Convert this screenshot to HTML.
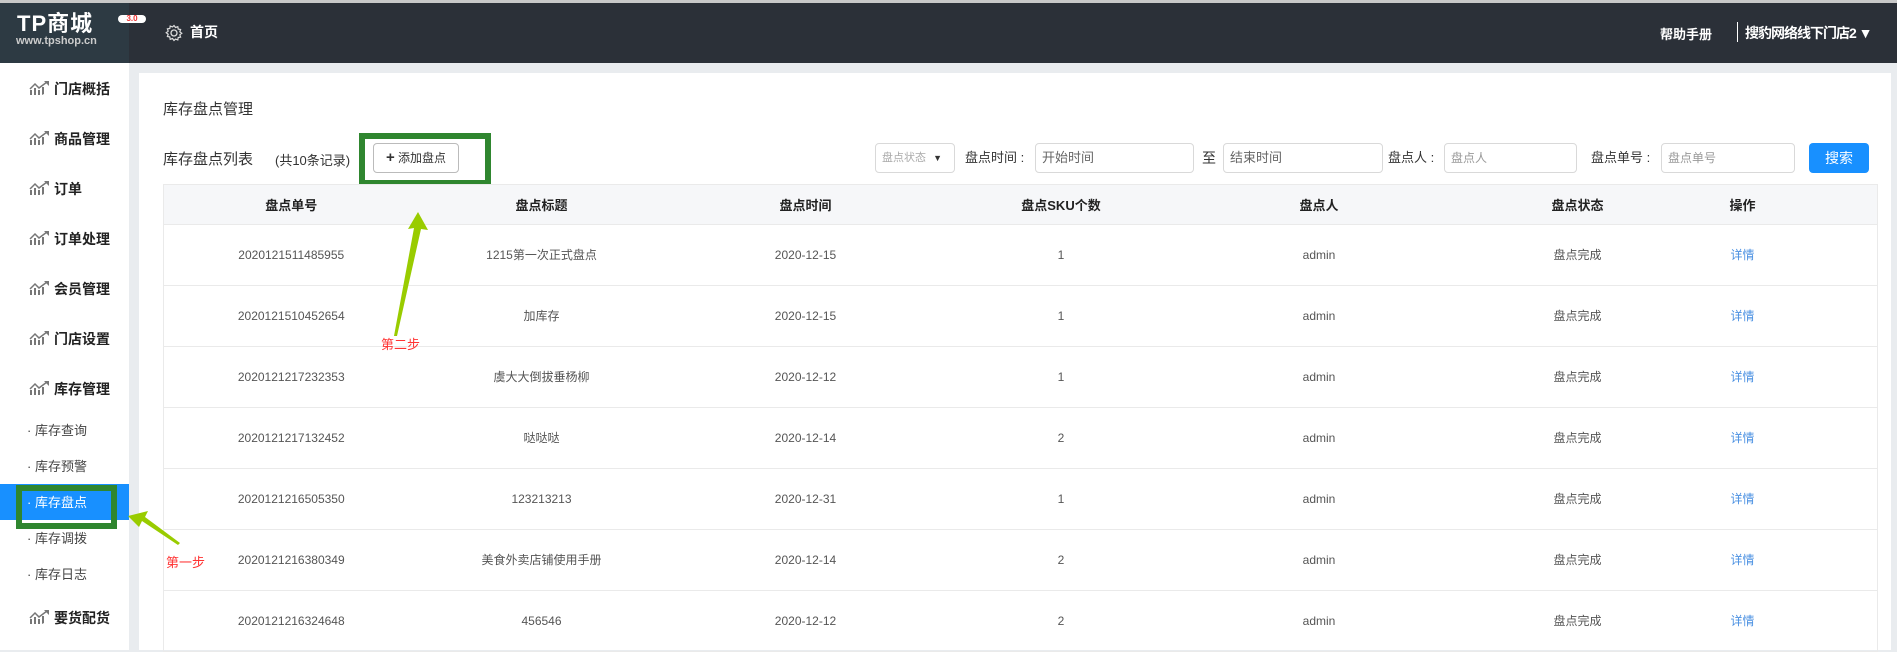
<!DOCTYPE html>
<html><head><meta charset="utf-8">
<style>
*{margin:0;padding:0;box-sizing:border-box}
body{width:1897px;height:650px;overflow:hidden;background:#e9ecef;font-family:"Liberation Sans","Noto Sans CJK SC",sans-serif;position:relative;color:#333}
.abs{position:absolute;white-space:nowrap}
.top{position:absolute;left:0;top:0;width:1897px;height:63px;background:#2b3038;border-top:3px solid #c8c8c8}
.logo{position:absolute;left:0;top:3px;width:129px;height:60px;background:#2d3a43}
.side{position:absolute;left:0;top:63px;width:129px;height:587px;background:#fff}
.panel{position:absolute;left:139px;top:73px;width:1752px;height:577px;background:#fff}
.mi{position:absolute;left:29px;font-size:14px;color:#222;font-weight:bold;height:20px;line-height:20px}
.mi svg{vertical-align:-2px;margin-right:4px}
.si{position:absolute;left:27px;font-size:13px;color:#444;line-height:18px}
.inp{position:absolute;top:143px;height:30px;border:1px solid #d9d9d9;border-radius:4px;background:#fff;font-size:12px;color:#999;line-height:28px;padding-left:6px}
.lbl{position:absolute;top:143px;line-height:30px;font-size:13px;color:#333}
table{position:absolute;left:163px;top:184px;width:1715px;border-collapse:collapse;font-size:12px;border-left:1px solid #eaeaea;border-right:1px solid #eaeaea}
th{height:40px;background:#f6f7f9;font-weight:bold;color:#222;font-size:13px;border-top:1px solid #eaeaea;border-bottom:1px solid #eaeaea}
td{height:61px;text-align:center;color:#555;border-bottom:1px solid #eaeaea;line-height:16px}
td a{color:#4a90e2;text-decoration:none}
</style></head><body>
<div class="top"></div>
<div class="logo">
 <div class="abs" style="left:17px;top:10px;font-size:22px;line-height:22px;font-weight:bold;color:#fff;letter-spacing:1px">TP商城</div>
 <div class="abs" style="left:118px;top:12px;width:28px;height:8px;background:#fff;border-radius:4px;font-size:8px;line-height:8px;color:#e33;text-align:center;font-weight:bold">3.0</div>
 <div class="abs" style="left:16px;top:33px;font-size:11px;line-height:11px;font-weight:bold;color:#ccc">www.tpshop.cn</div>
</div>
<svg class="abs" style="left:165px;top:24px" width="18" height="18" viewBox="0 0 18 18"><circle cx="9" cy="9" r="3" fill="none" stroke="#ddd" stroke-width="1.3"/><path d="M9 1.5l1.5 2 2.3-.8.4 2.4 2.4.4-.8 2.3 2 1.5-2 1.5.8 2.3-2.4.4-.4 2.4-2.3-.8L9 16.5l-1.5-2-2.3.8-.4-2.4-2.4-.4.8-2.3-2-1.5 2-1.5-.8-2.3 2.4-.4.4-2.4 2.3.8z" fill="none" stroke="#ddd" stroke-width="1.2"/></svg>
<div class="abs" style="left:190px;top:22px;font-size:14px;font-weight:bold;color:#fff">首页</div>
<div class="abs" style="left:1660px;top:24px;font-size:13px;font-weight:bold;color:#fff">帮助手册</div>
<div class="abs" style="left:1737px;top:22px;width:1px;height:20px;background:#fff"></div>
<div class="abs" style="left:1745px;top:23px;font-size:14px;font-weight:bold;color:#fff;letter-spacing:-1px">搜豹网络线下门店2 ▼</div>

<div class="side"></div>
<div class="panel"></div>

<div class="mi" style="top:79px"><svg width="21" height="15" viewBox="0 0 21 15"><path d="M1 14V9h2v5zM5 14V7h2v7zM9 14V9h2v5zM13 14V6h2v7z" fill="#777"/><path d="M1 8l5-5 4 4 8-6" stroke="#777" stroke-width="1.5" fill="none"/><path d="M15 0h5v5z" fill="#777"/></svg>门店概括</div>
<div class="mi" style="top:129px"><svg width="21" height="15" viewBox="0 0 21 15"><path d="M1 14V9h2v5zM5 14V7h2v7zM9 14V9h2v5zM13 14V6h2v7z" fill="#777"/><path d="M1 8l5-5 4 4 8-6" stroke="#777" stroke-width="1.5" fill="none"/><path d="M15 0h5v5z" fill="#777"/></svg>商品管理</div>
<div class="mi" style="top:179px"><svg width="21" height="15" viewBox="0 0 21 15"><path d="M1 14V9h2v5zM5 14V7h2v7zM9 14V9h2v5zM13 14V6h2v7z" fill="#777"/><path d="M1 8l5-5 4 4 8-6" stroke="#777" stroke-width="1.5" fill="none"/><path d="M15 0h5v5z" fill="#777"/></svg>订单</div>
<div class="mi" style="top:229px"><svg width="21" height="15" viewBox="0 0 21 15"><path d="M1 14V9h2v5zM5 14V7h2v7zM9 14V9h2v5zM13 14V6h2v7z" fill="#777"/><path d="M1 8l5-5 4 4 8-6" stroke="#777" stroke-width="1.5" fill="none"/><path d="M15 0h5v5z" fill="#777"/></svg>订单处理</div>
<div class="mi" style="top:279px"><svg width="21" height="15" viewBox="0 0 21 15"><path d="M1 14V9h2v5zM5 14V7h2v7zM9 14V9h2v5zM13 14V6h2v7z" fill="#777"/><path d="M1 8l5-5 4 4 8-6" stroke="#777" stroke-width="1.5" fill="none"/><path d="M15 0h5v5z" fill="#777"/></svg>会员管理</div>
<div class="mi" style="top:329px"><svg width="21" height="15" viewBox="0 0 21 15"><path d="M1 14V9h2v5zM5 14V7h2v7zM9 14V9h2v5zM13 14V6h2v7z" fill="#777"/><path d="M1 8l5-5 4 4 8-6" stroke="#777" stroke-width="1.5" fill="none"/><path d="M15 0h5v5z" fill="#777"/></svg>门店设置</div>
<div class="mi" style="top:379px"><svg width="21" height="15" viewBox="0 0 21 15"><path d="M1 14V9h2v5zM5 14V7h2v7zM9 14V9h2v5zM13 14V6h2v7z" fill="#777"/><path d="M1 8l5-5 4 4 8-6" stroke="#777" stroke-width="1.5" fill="none"/><path d="M15 0h5v5z" fill="#777"/></svg>库存管理</div>
<div class="si" style="top:422px">· 库存查询</div>
<div class="si" style="top:458px">· 库存预警</div>
<div class="abs" style="left:0;top:484px;width:129px;height:36px;background:#1890ff"></div>
<div class="si" style="top:494px;color:#fff">· 库存盘点</div>
<div class="abs" style="left:16px;top:485px;width:101px;height:44px;border:6px solid #2f862f"></div>
<div class="si" style="top:530px">· 库存调拨</div>
<div class="si" style="top:566px">· 库存日志</div>
<div class="mi" style="top:608px"><svg width="21" height="15" viewBox="0 0 21 15"><path d="M1 14V9h2v5zM5 14V7h2v7zM9 14V9h2v5zM13 14V6h2v7z" fill="#777"/><path d="M1 8l5-5 4 4 8-6" stroke="#777" stroke-width="1.5" fill="none"/><path d="M15 0h5v5z" fill="#777"/></svg>要货配货</div>

<div class="abs" style="left:163px;top:98px;font-size:15px;color:#333">库存盘点管理</div>
<div class="abs" style="left:163px;top:148px;font-size:15px;color:#333">库存盘点列表</div>
<div class="abs" style="left:275px;top:150px;font-size:13px;color:#333">(共10条记录)</div>
<div class="abs" style="left:373px;top:143px;width:86px;height:30px;border:1px solid #bbb;border-radius:4px;font-size:12px;line-height:28px;text-align:center;color:#333"><b style="font-size:15px">+</b> 添加盘点</div>
<div class="abs" style="left:359px;top:133px;width:132px;height:53px;border:6px solid #2f862f"></div>

<div class="inp" style="left:875px;width:80px;font-size:11px;color:#aaa">盘点状态 <span style="color:#333;font-size:9px;margin-left:4px">▼</span></div>
<div class="lbl" style="left:965px">盘点时间 :</div>
<div class="inp" style="left:1035px;width:159px;font-size:13px;color:#666">开始时间</div>
<div class="lbl" style="left:1202px;font-size:14px">至</div>
<div class="inp" style="left:1223px;width:160px;font-size:13px;color:#666">结束时间</div>
<div class="lbl" style="left:1388px">盘点人 :</div>
<div class="inp" style="left:1444px;width:133px">盘点人</div>
<div class="lbl" style="left:1591px">盘点单号 :</div>
<div class="inp" style="left:1661px;width:134px">盘点单号</div>
<div class="abs" style="left:1809px;top:143px;width:60px;height:30px;background:#1890ff;border-radius:4px;color:#fff;font-size:14px;line-height:30px;text-align:center">搜索</div>

<table>
<colgroup><col style="width:255px"><col style="width:246px"><col style="width:282px"><col style="width:229px"><col style="width:287px"><col style="width:230px"><col style="width:100px"><col></colgroup>
<tr><th>盘点单号</th><th>盘点标题</th><th>盘点时间</th><th>盘点SKU个数</th><th>盘点人</th><th>盘点状态</th><th>操作</th><th></th></tr>
<tr><td>2020121511485955</td><td>1215第一次正式盘点</td><td>2020-12-15</td><td>1</td><td>admin</td><td>盘点完成</td><td><a>详情</a></td><td></td></tr>
<tr><td>2020121510452654</td><td>加库存</td><td>2020-12-15</td><td>1</td><td>admin</td><td>盘点完成</td><td><a>详情</a></td><td></td></tr>
<tr><td>2020121217232353</td><td>虞大大倒拔垂杨柳</td><td>2020-12-12</td><td>1</td><td>admin</td><td>盘点完成</td><td><a>详情</a></td><td></td></tr>
<tr><td>2020121217132452</td><td>哒哒哒</td><td>2020-12-14</td><td>2</td><td>admin</td><td>盘点完成</td><td><a>详情</a></td><td></td></tr>
<tr><td>2020121216505350</td><td>123213213</td><td>2020-12-31</td><td>1</td><td>admin</td><td>盘点完成</td><td><a>详情</a></td><td></td></tr>
<tr><td>2020121216380349</td><td>美食外卖店铺使用手册</td><td>2020-12-14</td><td>2</td><td>admin</td><td>盘点完成</td><td><a>详情</a></td><td></td></tr>
<tr><td>2020121216324648</td><td>456546</td><td>2020-12-12</td><td>2</td><td>admin</td><td>盘点完成</td><td><a>详情</a></td><td></td></tr>
</table>

<svg class="abs" style="left:0;top:0" width="1897" height="650">
<polygon points="418,212 428,230 421,229 397,336 394,336 414,228 408,229" fill="#99cc00"/>
<polygon points="128,516 148,511 145,517 180,543 178,545 142,521 139,527" fill="#99cc00"/>
</svg>
<div class="abs" style="left:381px;top:334px;font-size:13px;color:#f33">第二步</div>
<div class="abs" style="left:166px;top:552px;font-size:13px;color:#f33">第一步</div>
</body></html>
